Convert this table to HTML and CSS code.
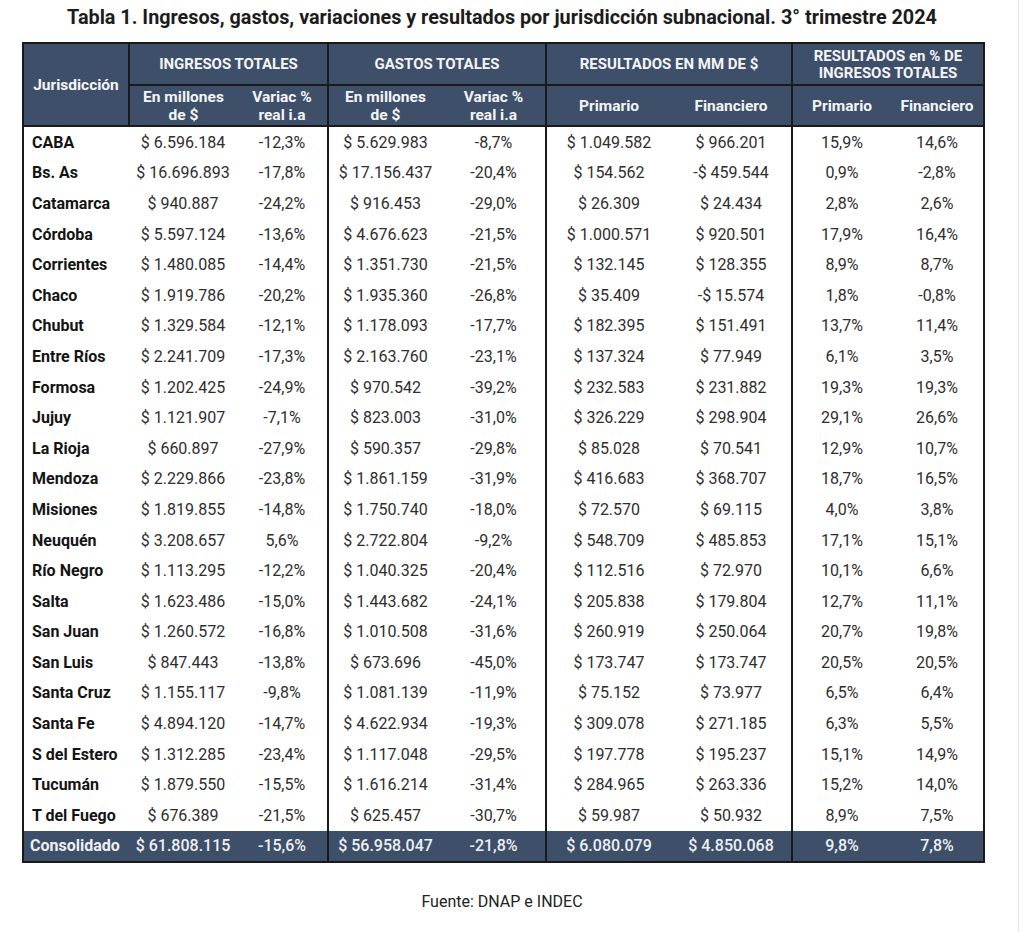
FILE: index.html
```html
<!DOCTYPE html>
<html lang="es">
<head>
<meta charset="utf-8">
<title>Tabla 1</title>
<link rel="stylesheet" href="styles.css">
</head>
<body>
<div class="page">
  <h1 class="title">Tabla 1. Ingresos, gastos, variaciones y resultados por jurisdicción subnacional. 3° trimestre 2024</h1>
  <table class="data">
    <colgroup>
      <col class="c-jur">
      <col class="c-ing1"><col class="c-ing2">
      <col class="c-gas1"><col class="c-gas2">
      <col class="c-res1"><col class="c-res2">
      <col class="c-pct1"><col class="c-pct2">
    </colgroup>
    <thead>
      <tr class="h1row">
        <th rowspan="2" class="jur-h g-end">Jurisdicción</th>
        <th colspan="2" class="g-end">INGRESOS TOTALES</th>
        <th colspan="2" class="g-end">GASTOS TOTALES</th>
        <th colspan="2" class="g-end">RESULTADOS EN MM DE $</th>
        <th colspan="2" class="two">RESULTADOS en % DE<br>INGRESOS TOTALES</th>
      </tr>
      <tr class="h2row">
        <th>En millones<br>de $</th>
        <th class="g-end">Variac %<br>real i.a</th>
        <th>En millones<br>de $</th>
        <th class="g-end">Variac %<br>real i.a</th>
        <th>Primario</th>
        <th class="g-end">Financiero</th>
        <th>Primario</th>
        <th>Financiero</th>
      </tr>
    </thead>
    <tbody>
      <tr><td class="jur">CABA</td><td>$ 6.596.184</td><td class="g-end">-12,3%</td><td>$ 5.629.983</td><td class="g-end">-8,7%</td><td>$ 1.049.582</td><td class="g-end">$ 966.201</td><td>15,9%</td><td>14,6%</td></tr>
      <tr><td class="jur">Bs. As</td><td>$ 16.696.893</td><td class="g-end">-17,8%</td><td>$ 17.156.437</td><td class="g-end">-20,4%</td><td>$ 154.562</td><td class="g-end">-$ 459.544</td><td>0,9%</td><td>-2,8%</td></tr>
      <tr><td class="jur">Catamarca</td><td>$ 940.887</td><td class="g-end">-24,2%</td><td>$ 916.453</td><td class="g-end">-29,0%</td><td>$ 26.309</td><td class="g-end">$ 24.434</td><td>2,8%</td><td>2,6%</td></tr>
      <tr><td class="jur">Córdoba</td><td>$ 5.597.124</td><td class="g-end">-13,6%</td><td>$ 4.676.623</td><td class="g-end">-21,5%</td><td>$ 1.000.571</td><td class="g-end">$ 920.501</td><td>17,9%</td><td>16,4%</td></tr>
      <tr><td class="jur">Corrientes</td><td>$ 1.480.085</td><td class="g-end">-14,4%</td><td>$ 1.351.730</td><td class="g-end">-21,5%</td><td>$ 132.145</td><td class="g-end">$ 128.355</td><td>8,9%</td><td>8,7%</td></tr>
      <tr><td class="jur">Chaco</td><td>$ 1.919.786</td><td class="g-end">-20,2%</td><td>$ 1.935.360</td><td class="g-end">-26,8%</td><td>$ 35.409</td><td class="g-end">-$ 15.574</td><td>1,8%</td><td>-0,8%</td></tr>
      <tr><td class="jur">Chubut</td><td>$ 1.329.584</td><td class="g-end">-12,1%</td><td>$ 1.178.093</td><td class="g-end">-17,7%</td><td>$ 182.395</td><td class="g-end">$ 151.491</td><td>13,7%</td><td>11,4%</td></tr>
      <tr><td class="jur">Entre Ríos</td><td>$ 2.241.709</td><td class="g-end">-17,3%</td><td>$ 2.163.760</td><td class="g-end">-23,1%</td><td>$ 137.324</td><td class="g-end">$ 77.949</td><td>6,1%</td><td>3,5%</td></tr>
      <tr><td class="jur">Formosa</td><td>$ 1.202.425</td><td class="g-end">-24,9%</td><td>$ 970.542</td><td class="g-end">-39,2%</td><td>$ 232.583</td><td class="g-end">$ 231.882</td><td>19,3%</td><td>19,3%</td></tr>
      <tr><td class="jur">Jujuy</td><td>$ 1.121.907</td><td class="g-end">-7,1%</td><td>$ 823.003</td><td class="g-end">-31,0%</td><td>$ 326.229</td><td class="g-end">$ 298.904</td><td>29,1%</td><td>26,6%</td></tr>
      <tr><td class="jur">La Rioja</td><td>$ 660.897</td><td class="g-end">-27,9%</td><td>$ 590.357</td><td class="g-end">-29,8%</td><td>$ 85.028</td><td class="g-end">$ 70.541</td><td>12,9%</td><td>10,7%</td></tr>
      <tr><td class="jur">Mendoza</td><td>$ 2.229.866</td><td class="g-end">-23,8%</td><td>$ 1.861.159</td><td class="g-end">-31,9%</td><td>$ 416.683</td><td class="g-end">$ 368.707</td><td>18,7%</td><td>16,5%</td></tr>
      <tr><td class="jur">Misiones</td><td>$ 1.819.855</td><td class="g-end">-14,8%</td><td>$ 1.750.740</td><td class="g-end">-18,0%</td><td>$ 72.570</td><td class="g-end">$ 69.115</td><td>4,0%</td><td>3,8%</td></tr>
      <tr><td class="jur">Neuquén</td><td>$ 3.208.657</td><td class="g-end">5,6%</td><td>$ 2.722.804</td><td class="g-end">-9,2%</td><td>$ 548.709</td><td class="g-end">$ 485.853</td><td>17,1%</td><td>15,1%</td></tr>
      <tr><td class="jur">Río Negro</td><td>$ 1.113.295</td><td class="g-end">-12,2%</td><td>$ 1.040.325</td><td class="g-end">-20,4%</td><td>$ 112.516</td><td class="g-end">$ 72.970</td><td>10,1%</td><td>6,6%</td></tr>
      <tr><td class="jur">Salta</td><td>$ 1.623.486</td><td class="g-end">-15,0%</td><td>$ 1.443.682</td><td class="g-end">-24,1%</td><td>$ 205.838</td><td class="g-end">$ 179.804</td><td>12,7%</td><td>11,1%</td></tr>
      <tr><td class="jur">San Juan</td><td>$ 1.260.572</td><td class="g-end">-16,8%</td><td>$ 1.010.508</td><td class="g-end">-31,6%</td><td>$ 260.919</td><td class="g-end">$ 250.064</td><td>20,7%</td><td>19,8%</td></tr>
      <tr><td class="jur">San Luis</td><td>$ 847.443</td><td class="g-end">-13,8%</td><td>$ 673.696</td><td class="g-end">-45,0%</td><td>$ 173.747</td><td class="g-end">$ 173.747</td><td>20,5%</td><td>20,5%</td></tr>
      <tr><td class="jur">Santa Cruz</td><td>$ 1.155.117</td><td class="g-end">-9,8%</td><td>$ 1.081.139</td><td class="g-end">-11,9%</td><td>$ 75.152</td><td class="g-end">$ 73.977</td><td>6,5%</td><td>6,4%</td></tr>
      <tr><td class="jur">Santa Fe</td><td>$ 4.894.120</td><td class="g-end">-14,7%</td><td>$ 4.622.934</td><td class="g-end">-19,3%</td><td>$ 309.078</td><td class="g-end">$ 271.185</td><td>6,3%</td><td>5,5%</td></tr>
      <tr><td class="jur">S del Estero</td><td>$ 1.312.285</td><td class="g-end">-23,4%</td><td>$ 1.117.048</td><td class="g-end">-29,5%</td><td>$ 197.778</td><td class="g-end">$ 195.237</td><td>15,1%</td><td>14,9%</td></tr>
      <tr><td class="jur">Tucumán</td><td>$ 1.879.550</td><td class="g-end">-15,5%</td><td>$ 1.616.214</td><td class="g-end">-31,4%</td><td>$ 284.965</td><td class="g-end">$ 263.336</td><td>15,2%</td><td>14,0%</td></tr>
      <tr><td class="jur">T del Fuego</td><td>$ 676.389</td><td class="g-end">-21,5%</td><td>$ 625.457</td><td class="g-end">-30,7%</td><td>$ 59.987</td><td class="g-end">$ 50.932</td><td>8,9%</td><td>7,5%</td></tr>
    </tbody>
    <tfoot>
      <tr class="total"><td class="jur">Consolidado</td><td>$ 61.808.115</td><td class="g-end">-15,6%</td><td>$ 56.958.047</td><td class="g-end">-21,8%</td><td>$ 6.080.079</td><td class="g-end">$ 4.850.068</td><td>9,8%</td><td>7,8%</td></tr>
    </tfoot>
  </table>
  <p class="source">Fuente: DNAP e INDEC</p>
</div>
</body>
</html>
```

FILE: styles.css
```css
html, body {
  margin: 0;
  padding: 0;
  background: #ffffff;
}

body {
  font-family: Roboto, "Liberation Sans", Arial, sans-serif;
  color: #2e2e2e;
}

.page {
  width: 1019px;
  min-height: 932px;
  box-sizing: border-box;
  border-right: 1px solid #e4e4e4;
  padding-top: 6px;
}

.title {
  margin: 0 0 12px 0;
  font-size: 19.8px;
  line-height: 24px;
  font-weight: 700;
  color: #1c1c1c;
  text-align: center;
  padding-right: 14px;
}

.data {
  margin-left: 22px;
  border-collapse: collapse;
  table-layout: fixed;
  width: 961px;
  border: 2px solid #1a1a1a;
}

.c-jur { width: 106px; }
.c-ing1 { width: 108px; }
.c-ing2 { width: 91px; }
.c-gas1 { width: 114px; }
.c-gas2 { width: 104px; }
.c-res1 { width: 125px; }
.c-res2 { width: 121px; }
.c-pct1 { width: 99px; }
.c-pct2 { width: 93px; }

.data th {
  background: #3e4f69;
  color: #f4f5f7;
  font-weight: 700;
  font-size: 15px;
  text-align: center;
  padding: 0;
  border-bottom: 2px solid #1a1a1a;
}

.h1row th {
  height: 39px;
  line-height: 18px;
}

.h1row .two {
  font-size: 15px;
  line-height: 17px;
  padding-top: 1px;
}

.h2row th {
  height: 39px;
  font-size: 15.5px;
  line-height: 18px;
}

.data th.jur-h {
  font-size: 15.5px;
}

.data td {
  height: 30.6px;
  padding: 0;
  font-size: 16px;
  text-align: center;
  white-space: nowrap;
  color: #2e2e2e;
}

.data td.jur {
  text-align: left;
  padding-left: 8px;
  font-weight: 700;
  color: #141414;
}

.g-end {
  border-right: 2px solid #1a1a1a;
}

.total td {
  background: #3e4f69;
  color: #eef0f3;
  height: 30px;
  font-weight: 500;
}

.data .total td.jur {
  color: #eef0f3;
  font-weight: 700;
  padding-left: 6px;
}

.source {
  margin: 29px 0 0 0;
  text-align: center;
  font-size: 16px;
  color: #222222;
  padding-right: 14px;
}
```
